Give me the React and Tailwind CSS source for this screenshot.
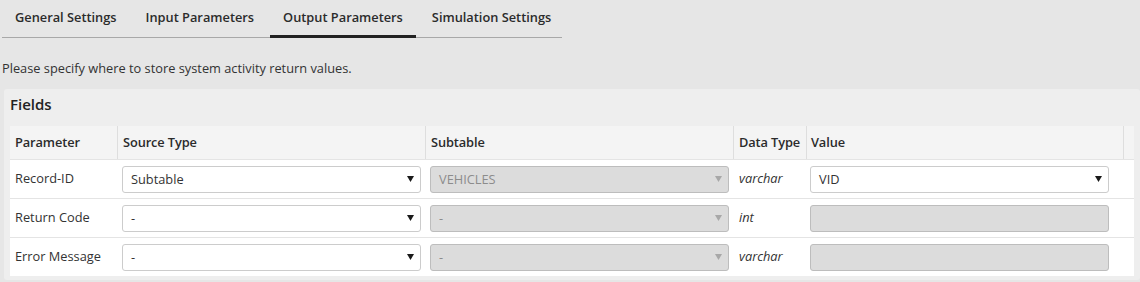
import React from 'react';

const tabs = ['General Settings', 'Input Parameters', 'Output Parameters', 'Simulation Settings'];

const rows = [
  { name: 'Record-ID', source: 'Subtable', sub: 'VEHICLES', type: 'varchar', value: 'VID' },
  { name: 'Return Code', source: '-', sub: '-', type: 'int', value: null },
  { name: 'Error Message', source: '-', sub: '-', type: 'varchar', value: null },
];

const Arrow = ({ disabled }) => (
  <svg width="7" height="6" viewBox="0 0 7 6" className="shrink-0">
    <polygon points="0,0 7,0 3.5,6" fill={disabled ? '#a8a8a8' : '#1a1a1a'} />
  </svg>
);

const Select = ({ value, disabled, className = '' }) => (
  <div
    className={`flex h-[27px] items-center justify-between rounded-[3px] border pl-2 pr-[6px] ${
      disabled ? 'border-[#bdbdbd] bg-[#dcdcdc] text-[#8c8c8c]' : 'border-[#cccccc] bg-white text-[#333]'
    } ${className}`}
  >
    <span className="leading-[18px]">{value}</span>
    <Arrow disabled={disabled} />
  </div>
);

export default function App() {
  return (
    <div className="h-[282px] w-[1140px] overflow-hidden bg-[#e6e6e6] font-['Open_Sans',sans-serif] text-[12.8px] text-[#333]">
      {/* Tabs */}
      <div className="ml-[2px] flex w-[560px] gap-[3px] border-b border-[#a8a8a8]">
        {tabs.map((t) => (
          <div
            key={t}
            className={`-mb-px whitespace-nowrap border-b-[3px] px-[13px] pt-2 pb-[9px] font-semibold leading-[18px] text-[#2b2b2b] ${
              t === 'Output Parameters' ? 'border-[#222]' : 'border-transparent'
            }`}
          >
            {t}
          </div>
        ))}
      </div>

      <p className="mt-[21px] ml-[2px] leading-[18px]">Please specify where to store system activity return values.</p>

      {/* Panel */}
      <div className="mt-[12px] ml-[4px] w-[1136px] rounded-[3px] bg-[#eeeeee] px-[6px] pt-[4px] pb-[4px]">
        <h2 className="mb-[11px] text-[15px] font-semibold leading-[22px] text-[#222]">Fields</h2>

        <div className="w-[1124px]">
          <div className="grid h-[33px] grid-cols-[108px_308px_308px_73px_317px_10px] bg-[#f4f4f4] font-semibold tracking-[-0.1px] text-[#2b2b2b]">
            <div className="flex items-center border-r border-[#dedede] pl-[5px]">Parameter</div>
            <div className="flex items-center border-r border-[#dedede] pl-[5px]">Source Type</div>
            <div className="flex items-center border-r border-[#dedede] pl-[5px]">Subtable</div>
            <div className="flex items-center border-r border-[#dedede] pl-[5px] whitespace-nowrap">Data Type</div>
            <div className="flex items-center border-r border-[#dedede] pl-[4px]">Value</div>
            <div></div>
          </div>

          {rows.map((r) => (
            <div
              key={r.name}
              className="grid h-[39px] grid-cols-[108px_308px_308px_73px_317px_10px] items-center border-t border-[#e4e4e4] bg-white"
            >
              <div className="pl-[5px]">{r.name}</div>
              <div className="pl-[4px] pr-[5px]">
                <Select value={r.source} />
              </div>
              <div className="pl-[4px] pr-[5px]">
                <Select value={r.sub} disabled />
              </div>
              <div className="pl-[5px] italic">{r.type}</div>
              <div className="pl-[3px]">
                {r.value ? (
                  <Select value={r.value} className="w-[299px]" />
                ) : (
                  <div className="h-[27px] w-[299px] rounded-[3px] border border-[#bdbdbd] bg-[#dcdcdc]"></div>
                )}
              </div>
              <div></div>
            </div>
          ))}
        </div>
      </div>
    </div>
  );
}
